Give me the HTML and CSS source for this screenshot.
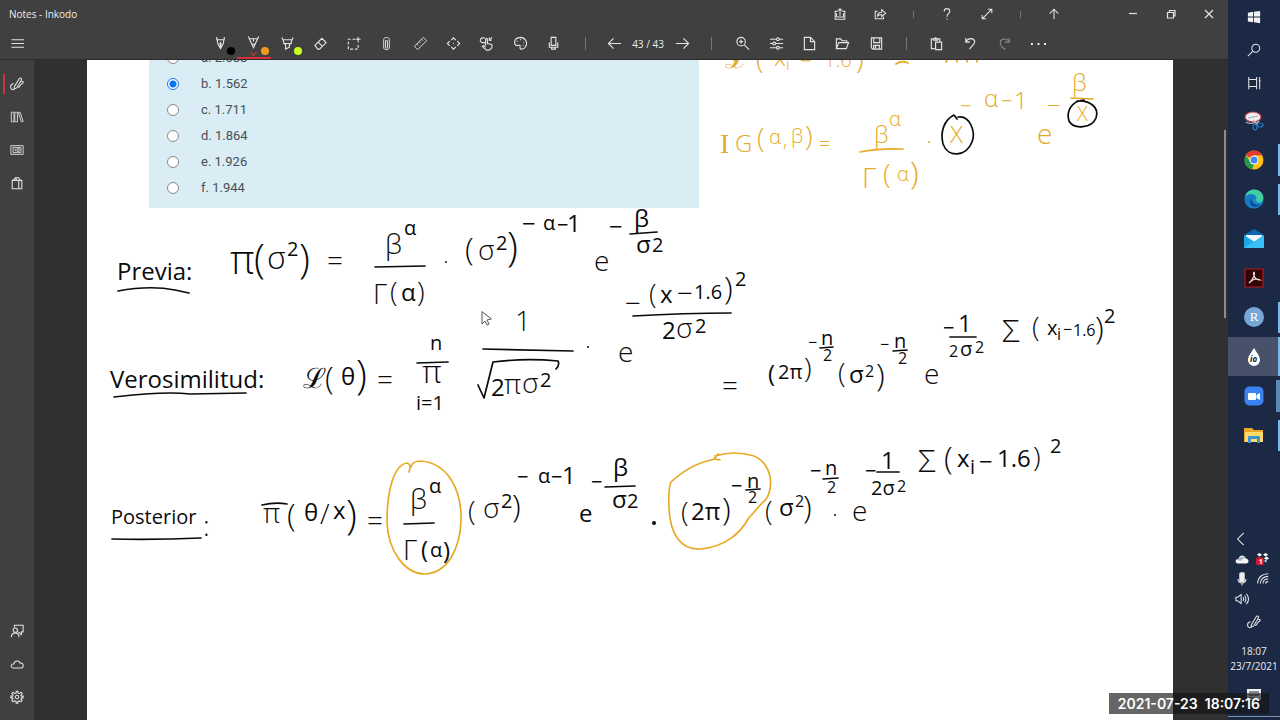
FILE: index.html
```html
<!DOCTYPE html>
<html lang="es">
<head>
<meta charset="utf-8">
<meta name="viewport" content="width=device-width, initial-scale=1">
<title>Notes - Inkodo</title>
<link rel="stylesheet" href="styles.css">
</head>
<body>
<div class="desktop">
<div class="app">
  <header class="titlebar">
    <span class="title">Notes - Inkodo</span>
    <div class="title-tools">
      <button aria-label="Export"><svg viewBox="0 0 16 16"><path d="M5 5H2.500V14H13.500V5H11M4 11.500H12V7M4 7V11.500M8 10V2M5.500 4.500L8 2L10.500 4.500"/></svg></button>
      <button aria-label="Share"><svg viewBox="0 0 16 16"><path d="M5 5H2.500V13.500H12V11M5 11C5 7 7 6 10 6V3L14.500 7L10 11V8.500C8 8.500 6 9 5 11Z"/></svg></button>
      <i class="sep"></i>
      <button aria-label="Help"><svg viewBox="0 0 16 16"><path d="M4.800 5C4.800 0.800 11.200 0.800 11.200 5C11.200 7.500 8 7.500 8 11M8 13V14.500"/></svg></button>
      <button aria-label="Full screen"><svg viewBox="0 0 16 16"><path d="M2.500 13.500L13.500 2.500M9 2.500H13.500V7M2.500 9V13.500H7"/></svg></button>
      <i class="sep"></i>
      <button aria-label="Pin toolbar"><svg viewBox="0 0 16 16"><path d="M8 14V2.500M3 7.500L8 2.500L13 7.500"/></svg></button>
    </div>
    <div class="window-controls">
      <button aria-label="Minimize"><svg viewBox="0 0 16 16"><path d="M4 7.500H12"/></svg></button>
      <button aria-label="Restore"><svg viewBox="0 0 16 16"><path d="M4.500 6.500H10.500V12H4.500ZM6.500 6.500V4.500H12V10H10.500"/></svg></button>
      <button aria-label="Close"><svg viewBox="0 0 16 16"><path d="M4 4L12 12M12 4L4 12"/></svg></button>
    </div>
  </header>
  <nav class="toolbar">
    <button class="menu" aria-label="Menu"><svg viewBox="0 0 16 16"><path d="M1.500 4H15M1.500 8H15M1.500 12H15"/></svg></button>
    <div class="pens">
      <button aria-label="Pen"><svg viewBox="0 0 16 16"><path d="M4 1V4M12 1V4M3.500 4H12.500M4.500 4L5 8L8 13.500L11 8L11.500 4M8 6V13M7.500 8H8.500V9.500H7.500Z"/></svg><b class="dot black"></b></button>
      <button class="active" aria-label="Pencil"><svg viewBox="0 0 16 16"><path d="M2.500 1.500L8 13.500L13.500 1.500M3.500 4H12.500M6 10H10M8 4V7"/></svg><b class="dot orange"></b></button>
      <button aria-label="Highlighter"><svg viewBox="0 0 16 16"><path d="M2 1.500L4 6V8L6 9V14L10 12V9L12 8V6L14 1.500M3 4H13M4 8H12"/></svg><b class="dot lime"></b></button>
      <button aria-label="Eraser"><svg viewBox="0 0 16 16"><path d="M2 10L9.500 2.500L14 7L7 14H5L2 10ZM5.500 6.500L10 11"/></svg></button>
      <button aria-label="Select"><svg viewBox="0 0 16 16"><path stroke-dasharray="3 2" d="M10 3.500H2.500V14H13V7"/><path d="M13 1V6M10.500 3.500H15.500"/></svg></button>
      <button aria-label="Attach"><svg class="fine" viewBox="0 0 16 16"><path d="M5 13V3.500C5 1 11 1 11 3.500V13C11 15 5 15 5 13M7 12V5H9V12M7 12C7 13.500 9 13.500 9 12"/></svg></button>
      <button aria-label="Ruler"><svg class="fine" viewBox="0 0 16 16"><path d="M1.500 11L11 1.500L14.500 5L5 14.500ZM4 8.500L5.500 10M6.500 6L8 7.500M9 3.500L10.500 5"/></svg></button>
      <button aria-label="Pan"><svg viewBox="0 0 16 16"><path d="M5.500 4.500L8 2L10.500 4.500M5.500 11.500L8 14L10.500 11.500M4 5.500L1.500 8L4 10.500M12 5.500L14.500 8L12 10.500M7.500 8H8.500"/></svg></button>
      <button aria-label="Touch"><svg viewBox="0 0 16 16"><path d="M7 10V4C7 2 9 2 9 4V8L13.500 9C15 11 13 15 10 15H8L3.500 11L5 10L7 12M6.500 7H4C0.500 7 0.500 2 4 2H6M10.500 4.500H13.500M11 1.500V4.500L14 1.500"/></svg></button>
      <button aria-label="Palette"><svg viewBox="0 0 16 16"><path d="M8 1.500C-1 2 1 12 5.500 10C7 9 8 10 7.500 12C7 15 11 14.500 13 12C17 6 12 1.500 8 1.500ZM4.500 5V6M8 3.500V4.500M11.500 6V7M11 9.500V10.500"/></svg></button>
      <button aria-label="Record"><svg viewBox="0 0 16 16"><path d="M5.500 1.500H10.500V10H5.500ZM3.500 7V12H12.500V7M6 12V14H10V12"/></svg></button>
    </div>
    <i class="sep"></i>
    <div class="pager">
      <button aria-label="Previous page"><svg viewBox="0 0 16 16"><path d="M15 8H1.500M7 2.500L1.500 8L7 13.500"/></svg></button>
      <span>43 / 43</span>
      <button aria-label="Next page"><svg viewBox="0 0 16 16"><path d="M1 8H14.500M9 2.500L14.500 8L9 13.500"/></svg></button>
    </div>
    <i class="sep"></i>
    <div class="files">
      <button aria-label="Zoom"><svg viewBox="0 0 16 16"><circle cx="6.500" cy="6" r="4.500"/><path d="M10 9.500L15 14.500M4.500 6H8.500M6.500 4V8"/></svg></button>
      <button aria-label="Settings"><svg viewBox="0 0 16 16"><path d="M1 3.500H8M11 3.500H15M1 8H4M7 8H15M1 12.500H8M11 12.500H15"/><circle cx="9.500" cy="3.500" r="1.500"/><circle cx="5.500" cy="8" r="1.500"/><circle cx="9.500" cy="12.500" r="1.500"/></svg></button>
      <button aria-label="New"><svg viewBox="0 0 16 16"><path d="M2.500 1.500H9L13.500 6V14.500H2.500ZM9 1.500V6H13.500"/></svg></button>
      <button aria-label="Open"><svg viewBox="0 0 16 16"><path d="M1.500 13.500V3H6L7.500 5H12.500V7M1.500 13.500L4 7H14.500L12 13.500Z"/></svg></button>
      <button aria-label="Save"><svg viewBox="0 0 16 16"><path d="M2.500 2H13.500V14H4L2.500 12.500ZM5 2V7H11.500V2M5 14V10H11V14M7 10V13"/></svg></button>
    </div>
    <i class="sep narrow"></i>
    <div class="edits">
      <button aria-label="Paste"><svg viewBox="0 0 16 16"><path d="M6 13.500H2.500V3H11.500V6M5 3V4.500H9V3M6 2H8M7 6.500H13.500V14.500H7Z"/></svg></button>
      <button aria-label="Undo"><svg viewBox="0 0 16 16"><path d="M3 2V6.500H7.500M3 6C6 1.500 12 2 12.500 6C12.500 9 9 10.500 7 14"/></svg></button>
      <button class="disabled" disabled aria-label="Redo"><svg viewBox="0 0 16 16"><path d="M13 2V6.500H8.500M13 6C10 1.500 3.500 3 3.500 7C3.500 10 6 13 9 14"/></svg></button>
      <button aria-label="More"><svg viewBox="0 0 16 16"><path class="solid" d="M0 7.500H2V9.500H0ZM7 7.500H9V9.500H7ZM14 7.500H16V9.500H14Z"/></svg></button>
    </div>
  </nav>
  <main class="body">
    <aside class="sidebar">
      <div>
        <button class="current" aria-label="Draw"><svg viewBox="0 0 16 16"><path d="M5 11L10.500 2C12 0 14 2 13 3.500L7.500 12.500L4.500 14ZM4 7.500C-1 9 0 15 4 14.500M9.500 11C9 13 11.500 11 12 9L15 6.500C15.500 5 14 5 13 5.500"/></svg></button>
        <button aria-label="Library"><svg class="fine" viewBox="0 0 16 16"><path d="M1.500 2.500H4.500V13.500H1.500ZM5.500 2.500H8.500V13.500H5.500ZM9.500 3L11.500 2.500L15 13L13 13.500Z"/></svg></button>
        <button aria-label="Presentation"><svg class="fine" viewBox="0 0 16 16"><path d="M1 3H15V13H1ZM3.500 5H12.500V11H3.500ZM6 6.500V9.500M8 6.500H10.500V9.500H8Z"/></svg></button>
        <button aria-label="Store"><svg viewBox="0 0 16 16"><path d="M2.500 5H13.500V14.500H2.500ZM4 5L6 2H10L11.500 5M10 5V14M7 2V5"/></svg></button>
      </div>
      <div>
        <button aria-label="Feedback"><svg viewBox="0 0 16 16"><path d="M5 4V1.500H15V9H13V12L9.500 9"/><circle cx="6" cy="7" r="2.500"/><path d="M1.500 15C2 8.500 10 8.500 10.500 15"/></svg></button>
        <button aria-label="Cloud"><svg viewBox="0 0 16 16"><path d="M4 12.500C0 12.500 1 7.500 4.500 8C5 3.500 11 3.500 11.500 7C16 6.500 16 12.500 13 12.500Z"/></svg></button>
        <button aria-label="Preferences"><svg viewBox="0 0 16 16"><circle cx="8" cy="8" r="2"/><path d="M7 1.500H9V3.500L11 4L12.500 2.500L14 4L12.500 6L13 7H15V9H13L12.500 10.500L14 12L12.500 13.500L11 12.500L9 13V15H7V13L5 12.500L3.500 13.500L2 12L3.500 10L3 9H1V7H3L3.500 5.500L2 4L3.500 2.500L5 4L7 3.500Z"/></svg></button>
      </div>
    </aside>
    <section class="workspace">
      <article class="page">
        <form class="quiz">
          <label><input type="radio" name="q">a. 2.088</label>
          <label><input type="radio" name="q" checked>b. 1.562</label>
          <label><input type="radio" name="q">c. 1.711</label>
          <label><input type="radio" name="q">d. 1.864</label>
          <label><input type="radio" name="q">e. 1.926</label>
          <label><input type="radio" name="q">f. 1.944</label>
        </form>
        <svg class="ink" viewBox="87 60 1086 660">
          <g class="gold">
            <text class="f28" x="725" y="68">ℒ</text><text class="f28" x="756" y="69">(</text><text class="f24" x="774" y="66">x</text><text class="f16" x="786" y="70">i</text><text class="f20" x="800" y="68">−</text><text class="f20" x="824" y="67">1.6</text><text class="f28" x="856" y="69">)</text>
            <path d="M896 64Q902 60 908 63M946 62L947 60M957 62V60M967 62V60M977 62V60"/>
            <text class="f28 serif" x="720" y="153">I</text><text class="f24" x="735" y="152">G</text><text class="f28" x="757" y="148">(</text><text class="f20" x="769" y="144">α</text><text class="f20" x="783" y="146">,</text><text class="f20" x="791" y="143">β</text><text class="f28" x="805" y="146">)</text><text class="f20" x="819" y="151">=</text>
            <text class="f24" x="874" y="143">β</text><text class="f20" x="889" y="126">α</text><text class="f28" x="862" y="188">Γ</text><text class="f28" x="883" y="184">(</text><text class="f20" x="897" y="181">α</text><text class="f32" x="910" y="184">)</text><circle class="point" cx="929" cy="142" r="1"/>
            <text class="f24" x="950" y="143">X</text><text class="f20" x="960" y="113">−</text><text class="f24" x="984" y="107">α</text><text class="f20" x="1001" y="108">−</text><text class="f24" x="1014" y="109">1</text><text class="f28" x="1037" y="144">e</text><text class="f24" x="1047" y="114">−</text><text class="f24" x="1072" y="91">β</text><text class="f20" x="1077" y="121">X</text>
            <path d="M860 152Q880 148 903 149M1071 98L1093 99"/>
            <path d="M409 472Q412 464 407 463C394 465 387 490 387 522C388 551 405 574 425 574C448 573 460 548 461 521C462 489 447 463 421 461Q412 461 411 467"/>
            <path d="M715 459Q690 464 671 482Q668 490 669 508C670 533 680 550 700 549C726 547 741 532 748 519L762 503C775 494 774 464 754 456Q735 450 715 456M718 454L714 459L720 460"/>
          </g>
          <g class="black-ink">
            <path d="M957 119L954 115C944 120 940 132 943 144C948 158 966 157 972 142C976 132 970 115 958 117"/>
            <path d="M1084 100C1071 101 1066 112 1069 121C1074 130 1092 128 1096 118C1100 107 1089 100 1077 101"/>

            <text class="f24" x="117" y="280">Previa:</text><path d="M118 291Q150 285 175 290L189 293"/>
            <text class="f40" x="230" y="274">π</text><text class="f40" x="254" y="273">(</text><text class="f32" x="267" y="269">σ</text><text class="f20" x="287" y="256">2</text><text class="f40" x="299" y="273">)</text><text class="f28" x="327" y="271">=</text>
            <text class="f28" x="385" y="254">β</text><text class="f20" x="404" y="235">α</text><path d="M375 267L425 266"/><text class="f28" x="373" y="304">Γ</text><text class="f28" x="390" y="302">(</text><text class="f24" x="401" y="301">α</text><text class="f28" x="417" y="302">)</text>
            <circle class="point" cx="446" cy="262" r="1"/><text class="f32" x="465" y="260">(</text><text class="f28" x="478" y="260">σ</text><text class="f20" x="496" y="250">2</text><text class="f40" x="507" y="261">)</text>
            <text class="f24" x="522" y="232">−</text><text class="f20" x="543" y="230">α</text><text class="f20" x="557" y="232">−</text><text class="f24" x="567" y="232">1</text>
            <text class="f28" x="594" y="271">e</text><text class="f24" x="609" y="235">−</text><text class="f24" x="634" y="227">β</text><path d="M630 234L657 232"/><text class="f24" x="636" y="253">σ</text><text class="f20" x="652" y="252">2</text>

            <text class="f24" x="110" y="388">Verosimilitud:</text><path d="M114 397Q165 391 190 394L246 393"/>
            <text class="f28" x="303" y="388">ℒ</text><text class="f32" x="325" y="389">(</text><text class="f24" x="341" y="385">θ</text><text class="f40" x="356" y="389">)</text><text class="f28" x="377" y="390">=</text>
            <text class="f20" x="430" y="350">n</text><path d="M417 363L448 362"/><text class="f32" x="422" y="383">π</text><text class="f20" x="416" y="410">i=1</text>
            <text class="f28" x="515" y="331">1</text><path d="M483 349L573 351M478 385L484 398L493 362Q525 358 558 361Q560 365 556 369"/><text class="f24" x="491" y="396">2</text><text class="f28" x="504" y="394">π</text><text class="f28" x="522" y="393">σ</text><text class="f20" x="540" y="387">2</text>
            <circle class="point" cx="588" cy="347" r="1"/><text class="f28" x="618" y="362">e</text>
            <text class="f28" x="625" y="313">−</text><text class="f28" x="649" y="304">(</text><text class="f24" x="660" y="303">x</text><text class="f28" x="677" y="303">−</text><text class="f20" x="694" y="299">1.6</text><text class="f32" x="724" y="299">)</text><text class="f20" x="735" y="286">2</text><path d="M633 316Q685 313 731 313"/><text class="f24" x="662" y="339">2</text><text class="f28" x="676" y="338">σ</text><text class="f20" x="695" y="333">2</text>
            <text class="f28" x="722" y="396">=</text>
            <text class="f24" x="768" y="382">(</text><text class="f20" x="778" y="379">2π</text><text class="f28" x="804" y="378">)</text><text class="f16" x="808" y="348">−</text><text class="f20" x="821" y="345">n</text><path d="M820 348L833 347"/><text class="f16" x="823" y="361">2</text>
            <text class="f28" x="838" y="383">(</text><text class="f24" x="849" y="383">σ</text><text class="f16" x="865" y="377">2</text><text class="f32" x="876" y="386">)</text><text class="f16" x="880" y="350">−</text><text class="f20" x="894" y="348">n</text><path d="M893 351L907 350"/><text class="f16" x="898" y="364">2</text>
            <text class="f28" x="924" y="384">e</text><text class="f20" x="943" y="335">−</text><text class="f24" x="958" y="332">1</text><path d="M950 337H976"/><text class="f16" x="949" y="357">2</text><text class="f20" x="960" y="356">σ</text><text class="f16" x="975" y="353">2</text>
            <text class="f32" x="1002" y="342">Σ</text><text class="f28" x="1032" y="337">(</text><text class="f20" x="1047" y="335">x</text><text class="f16" x="1057" y="340">i</text><text class="f16" x="1063" y="335">−</text><text class="f16" x="1073" y="336">1.6</text><text class="f32" x="1095" y="339">)</text><text class="f20" x="1104" y="323">2</text>

            <text class="f20" x="111" y="524">Posterior</text><text class="f28" x="203" y="536">:</text><path d="M112 539Q155 540 201 538"/>
            <path d="M262 505Q275 502 287 504"/><text class="f28" x="263" y="523">π</text><text class="f32" x="287" y="526">(</text><text class="f24" x="304" y="521">θ</text><text class="f28" x="320" y="524">/</text><text class="f24" x="333" y="519">x</text><text class="f40" x="346" y="529">)</text><text class="f28" x="367" y="531">=</text>
            <text class="f28" x="410" y="509">β</text><text class="f20" x="429" y="493">α</text><path d="M404 524L434 523"/><text class="f28" x="403" y="560">Γ</text><text class="f24" x="421" y="558">(</text><text class="f20" x="430" y="557">α</text><text class="f24" x="443" y="559">)</text>
            <text class="f28" x="468" y="521">(</text><text class="f28" x="483" y="518">σ</text><text class="f20" x="501" y="508">2</text><text class="f32" x="512" y="517">)</text><text class="f20" x="517" y="484">−</text><text class="f20" x="538" y="483">α</text><text class="f20" x="551" y="484">−</text><text class="f24" x="562" y="484">1</text>
            <text class="f24" x="579" y="522">e</text><text class="f20" x="591" y="489">−</text><text class="f24" x="613" y="476">β</text><path d="M605 487L635 486"/><text class="f24" x="612" y="508">σ</text><text class="f20" x="627" y="508">2</text><circle class="point" cx="654" cy="523" r="2"/>
            <text class="f28" x="681" y="522">(</text><text class="f24" x="691" y="520">2π</text><text class="f32" x="722" y="520">)</text><text class="f20" x="731" y="493">−</text><text class="f20" x="747" y="488">n</text><path d="M746 490L760 489"/><text class="f16" x="748" y="503">2</text>
            <text class="f28" x="765" y="521">(</text><text class="f24" x="779" y="516">σ</text><text class="f16" x="795" y="507">2</text><text class="f32" x="803" y="518">)</text><text class="f20" x="810" y="478">−</text><text class="f20" x="825" y="475">n</text><path d="M823 479L838 478"/><text class="f16" x="827" y="493">2</text>
            <circle class="point" cx="835" cy="515" r="1"/><text class="f28" x="852" y="521">e</text><text class="f20" x="865" y="478">−</text><text class="f24" x="881" y="469">1</text><path d="M877 472H899"/><text class="f20" x="871" y="495">2σ</text><text class="f16" x="897" y="492">2</text>
            <text class="f32" x="918" y="472">Σ</text><text class="f32" x="944" y="469">(</text><text class="f24" x="957" y="467">x</text><text class="f20" x="970" y="474">i</text><text class="f24" x="979" y="470">−</text><text class="f24" x="997" y="467">1.6</text><text class="f28" x="1033" y="467">)</text><text class="f20" x="1050" y="453">2</text>
          </g>
          <path class="cursor" d="M482 312V324L485 321L487 325L489 324L487 320L491 319Z"/>
        </svg>
      </article>
    </section>
  </main>
</div>
<aside class="taskbar">
  <div class="system">
    <button aria-label="Start"><svg viewBox="0 0 16 16"><path class="solid" d="M1 3L7 2V7.500H1ZM8 2L15 1V7.500H8ZM1 8.500H7V14L1 13ZM8 8.500H15V15L8 14Z"/></svg></button>
    <button aria-label="Search"><svg viewBox="0 0 16 16"><circle cx="10" cy="6" r="4.500"/><path d="M6.500 9.500L1 15"/></svg></button>
    <button aria-label="Task view"><svg viewBox="0 0 16 16"><path d="M2 1V4H11V1M2 15V12H11V15M2 4V12M11 4V12M14.500 1V15M13.500 5.500H15.500"/></svg></button>
  </div>
  <div class="apps">
    <button aria-label="Snipping tool"><svg viewBox="0 0 20 20"><ellipse cx="9" cy="6" rx="8" ry="5" fill="#eee" stroke="#c53b48"/><path d="M4 7L14 5M2 11Q7 14 11 11" stroke="#aab"/><path d="M9 9L14 14M15 10L11 14" stroke="#bbc"/><ellipse cx="11" cy="16" rx="2" ry="3" stroke="#237ac1"/><ellipse cx="16" cy="14" rx="3" ry="2" stroke="#237ac1"/></svg></button>
    <button class="open" aria-label="Chrome"><svg class="flat" viewBox="0 0 20 20"><circle cx="10" cy="10" r="9.500" fill="#fbc116"/><path d="M10 10L1.800 5.200A9.500 9.500 0 0 1 18.200 5.200H10Z" fill="#e33b2e"/><path d="M1.800 5.200L7 13L10 14L8 19.300A9.500 9.500 0 0 1 1.800 5.200Z" fill="#219b4b"/><circle cx="10" cy="10" r="4.500" fill="#fff"/><circle cx="10" cy="10" r="3.500" fill="#4285f4"/></svg></button>
    <button class="open" aria-label="Edge"><svg class="flat" viewBox="0 0 20 20"><circle cx="10" cy="10" r="9.500" fill="#168bd2"/><path d="M1 8C4 -3 19 -1 19.500 9C19 15 12 14 12 11C15 6 5 2 1 8Z" fill="#42cda0"/><path d="M1 9C5 3 13 6 12 10C10 8 7 10 8 13C9 16 14 17 18 15C11 23 0 19 1 9Z" fill="#147bc9"/><path d="M8 9C7 13 11 17 17 15C11 21 2 16 8 9Z" fill="#144b91"/></svg></button>
    <button aria-label="Mail"><svg class="flat" viewBox="0 0 20 20"><path d="M0 6L10 0L20 6V19H0Z" fill="#0967b3"/><path d="M2 6H18V14H2Z" fill="#f2f8fc"/><path d="M0 6L12 14L20 19H0Z" fill="#20a7e8"/><path d="M20 6L0 19H20Z" fill="#38bff4"/></svg></button>
    <button aria-label="Acrobat"><svg viewBox="0 0 20 20"><path d="M1 1H19V19H1Z" fill="#310605" stroke="#b51a20"/><path d="M10 4Q9 5 10 8Q12 12 16 12Q11 9 5 15Q8 13 10 8Q11 5 10 4" stroke="#f3e8e5"/></svg></button>
    <button class="open" aria-label="R"><span class="r-logo">R</span></button>
    <button class="open selected" aria-label="Inkodo"><svg class="flat" viewBox="0 0 20 20"><path d="M10 1C7 6 4 9 4 13A6 6 0 0 0 16 13C16 9 13 6 10 1Z" fill="#fff"/><text class="drop-label" x="6" y="15">io</text></svg></button>
    <button class="open multi" aria-label="Zoom meeting"><svg class="flat" viewBox="0 0 20 20"><rect x="0.500" y="0.500" width="19" height="19" rx="5" fill="#3a82ed"/><rect x="4" y="7" width="8" height="7" rx="1" fill="#fff"/><path d="M12.500 9L16 7V14L12.500 12Z" fill="#fff"/></svg></button>
    <button class="open" aria-label="Explorer"><svg class="flat" viewBox="0 0 20 20"><path d="M0 3H8L10 5H19V17H0Z" fill="#eba82a"/><path d="M1 7H19V17H1Z" fill="#ffdc69"/><path d="M4 18V11H16V18H13V14H7V18Z" fill="#3d96cf"/></svg></button>
  </div>
  <div class="tray">
    <div class="tray-grid">
      <svg viewBox="0 0 16 16"><path d="M10 1L3 8L10 15"/></svg><span></span>
      <svg class="flat" viewBox="0 0 16 16"><path d="M3 13C-1 12 1 7 4 8C5 3 11 3 12 7C17 8 16 13 13 13Z" fill="#f3f5f9"/><path d="M2 9L5 7Q9 3 12 7Q9 6 7 10Z" fill="#a7b1c0"/></svg>
      <svg class="flat" viewBox="0 0 16 16"><path d="M4 1L7 3L4 5L1 3ZM11 1L14 3L11 5L8 3ZM12 5L15 7L12 9L9 7ZM9 10L12 9L12 12Z" fill="#fff"/><rect x="0" y="6" width="9" height="9" rx="2" fill="#d31629"/><text class="badge" x="3" y="14">1</text></svg>
      <svg viewBox="0 0 16 16"><path d="M3.500 8C3.500 14 12.500 14 12.500 8M8 13V15.500"/><rect x="5.500" y="1" width="5" height="10" rx="1" fill="#eee"/></svg>
      <svg viewBox="0 0 16 16"><path d="M2 13C2 6 7 2 14 2M5 13C5 8 9 5 14 5M8 13C8 10 10 8 14 8M11 13Q11 11 14 11"/></svg>
      <svg viewBox="0 0 16 16"><path d="M1 6H3L7 3V13L3 10H1ZM9 6Q11 8 9 10M11 4Q14 8 11 12M13 2Q18 8 13 14"/></svg>
    </div>
    <svg class="pen-tray" viewBox="0 0 16 16"><path d="M5 11L10.500 2C12 0 14 2 13 3.500L7.500 12.500L4.500 14ZM4 7.500C-1 9 0 15 4 14.500M9.500 11C9 13 11.500 11 12 9L15 6.500C15.500 5 14 5 13 5.500"/></svg>
    <time class="clock">18:07<br>23/7/2021</time>
    <svg class="notice" viewBox="0 0 16 16"><path class="solid" d="M1 1H15V12H10L7 15V12H1Z"/><path class="notice-lines" d="M3 4H13M3 7H13M3 10H8"/></svg>
  </div>
</aside>
<time class="stamp">2021-07-23&nbsp; 18:07:16</time>
</div>
</body>
</html>
```
FILE: styles.css
```css
* { box-sizing: border-box; }
body { margin: 0; background: #303030; color: #eee; font: 10px/16px "Open Sans", sans-serif; }
button { display: flex; align-items: center; justify-content: center; position: relative; padding: 0; border: 0; background: none; color: inherit; font: inherit; }
svg { width: 16px; height: 16px; fill: none; stroke: #e4e4e4; stroke-width: 1.2; overflow: visible; }
.fine { stroke-width: 1; }
.solid { fill: #f2f2f2; stroke: none; }
.flat { stroke: none; }
.desktop { position: relative; display: flex; min-height: 100vh; overflow: hidden; }
.app { display: flex; flex: 1; flex-direction: column; min-width: 0; }

.titlebar { display: flex; align-items: center; height: 28px; background: #404040; }
.title { flex: 1; padding-left: 9px; }
.title-tools, .window-controls { display: flex; align-items: center; }
.title-tools button { width: 40px; height: 28px; }
.title-tools svg { width: 14px; height: 14px; }
.title-tools .sep { width: 27px; }
.window-controls { padding-left: 40px; }
.window-controls button { width: 38px; height: 28px; }
.sep { display: flex; justify-content: center; width: 30px; }
.sep::before { content: ""; width: 1px; height: 13px; background: #777; }
.title-tools .sep::before { height: 7px; }
.toolbar { display: flex; align-items: center; height: 32px; background: #404040; border-bottom: 1px solid #2b2b2b; }
.toolbar button { height: 31px; }
.toolbar svg { width: 15px; height: 15px; }
.menu { width: 34px; }
.pens { display: grid; grid-template-columns: repeat(11, 1fr); width: 366px; margin-left: 170px; }
.pager { display: flex; align-items: center; }
.pager button { width: 28px; }
.pager span { width: 40px; text-align: center; }
.files { display: grid; grid-template-columns: repeat(5, 1fr); width: 167px; }
.narrow { width: 26px; }
.edits { display: grid; grid-template-columns: repeat(4, 1fr); width: 136px; }
.disabled svg { stroke: #888; }
.dot { position: absolute; right: 2px; bottom: 4px; width: 8px; height: 8px; border-radius: 50%; }
.black { background: #000; }
.orange { background: #f39a1c; }
.lime { background: #c9ff22; }
.active { border-bottom: 2px solid #d8313c; }
.active .dot { bottom: 2px; }
.active::after { content: ""; position: absolute; bottom: 2px; width: 4px; height: 4px; border: solid #d8313c; border-width: 0 1px 1px 0; transform: rotate(45deg); }

.body { display: flex; flex: 1; }
.sidebar { display: flex; flex-direction: column; justify-content: space-between; width: 34px; padding: 7px 0; background: #404040; }
.sidebar button { width: 34px; height: 33px; }
.sidebar svg { width: 14px; height: 14px; }
.current::before { content: ""; position: absolute; left: 3px; width: 2px; height: 20px; background: #c73742; }
.workspace { position: relative; display: flex; flex: 1; min-width: 0; padding: 0 55px 0 53px; background: #303030; }
.workspace::after { content: ""; position: absolute; right: 2px; top: 70px; width: 2px; height: 188px; background: #8c8c8c; }
.page { position: relative; flex: 1; min-width: 0; min-height: 660px; overflow: hidden; background: #fff; }
.quiz { display: flex; flex-direction: column; width: 550px; margin: -15px 0 0 62px; padding-bottom: 7px; background: #daecf4; color: #465057; font: 13px/26px Roboto, sans-serif; }
.quiz label { display: flex; align-items: center; gap: 22px; height: 26px; padding-left: 18px; }
.quiz input { appearance: none; width: 12px; height: 12px; margin: 0; border: 1px solid #888; border-radius: 50%; background: #fff; }
.quiz input:checked { border-color: #1976ed; background: radial-gradient(circle, #0874ed 3px, #fff 4px); }

.ink { position: absolute; left: 0; top: 0; width: 1086px; height: 660px; overflow: hidden; stroke: none; font: 400 24px "Open Sans", "DejaVu Sans", sans-serif; }
.ink path { stroke-width: 1.7; stroke-linecap: round; stroke-linejoin: round; }
.gold { fill: #e6aa27; font-weight: 300; }
.gold path { fill: none; stroke: #e6aa27; }
.black-ink { fill: #0b0b0b; }
.black-ink path { fill: none; stroke: #0b0b0b; }
.f16 { font-size: 16px; }
.f20 { font-size: 20px; }
.f24 { font-size: 24px; }
.f28 { font-size: 28px; font-weight: 300; }
.f32 { font-size: 32px; font-weight: 300; }
.f40 { font-size: 40px; font-weight: 300; }
.serif { font-family: "Liberation Serif", serif; }
.ink .cursor { fill: #fff; stroke: #555; stroke-width: 1; }

.taskbar { display: flex; flex-direction: column; width: 52px; background: #1b2945; }
.system button { width: 52px; height: 33px; }
.system svg { width: 14px; height: 14px; }
.apps { display: grid; grid-template-rows: repeat(9, 1fr); height: 354px; margin-top: 2px; }
.apps button { width: 52px; }
.apps svg { width: 20px; height: 20px; }
.open::after { content: ""; position: absolute; right: 0; top: 4px; bottom: 4px; width: 2px; background: #78b8ea; }
.selected { background: #47526a; }
.selected::after { top: 0; bottom: 0; }
.multi::after { width: 4px; background: #5b8bb4; }
.r-logo { width: 20px; height: 20px; border-radius: 50%; background: #75a8d6; color: #fff; font: 13px/20px "Liberation Serif", serif; }
.drop-label { fill: #111; font: italic bold 8px "Open Sans", sans-serif; }
.tray { display: flex; flex-direction: column; align-items: center; margin-top: auto; padding-bottom: 3px; }
.tray-grid { display: grid; grid-template-columns: 14px 14px; grid-auto-rows: 20px; column-gap: 7px; align-items: center; justify-items: center; margin-right: 3px; }
.tray-grid svg, .pen-tray { width: 14px; height: 14px; }
.badge { fill: #fff; font: bold 8px "Open Sans", sans-serif; }
.pen-tray { margin-top: 6px; }
.clock { margin: 15px 0 14px; line-height: 15px; text-align: center; }
.notice { margin-bottom: 12px; }
.notice-lines { stroke: #1b2945; }
.tray::after { content: ""; width: 52px; height: 1px; background: #8292ad; }
.stamp { position: absolute; right: 11px; bottom: 6px; padding: 0 9px; background: rgba(20, 20, 20, .65); color: #fff; font: 600 14px/21px Inter, sans-serif; white-space: nowrap; }
```
